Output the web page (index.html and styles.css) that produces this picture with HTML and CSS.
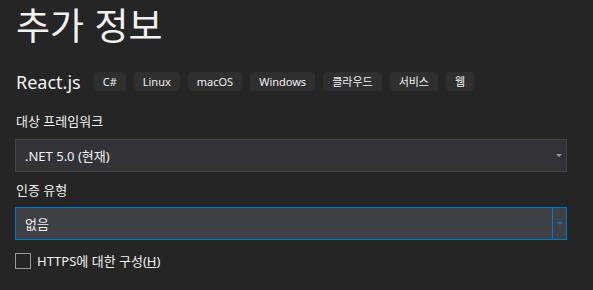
FILE: index.html
```html
<!DOCTYPE html>
<html lang="ko">
<head>
  <meta charset="UTF-8">
  <title>추가 정보</title>
  <link rel="stylesheet" href="styles.css">
</head>
<body>
  <div class="page">
    <h1>추가 정보</h1>
    <div class="template">
      <span class="template-name">React.js</span>
      <ul class="tags">
        <li>C#</li>
        <li>Linux</li>
        <li>macOS</li>
        <li>Windows</li>
        <li>클라우드</li>
        <li>서비스</li>
        <li>웹</li>
      </ul>
    </div>

    <label class="field-label">대상 프레임워크</label>
    <div class="select">
      <span class="select-value">.NET 5.0 (현재)</span>
      <span class="select-arrow"></span>
    </div>

    <label class="field-label second">인증 유형</label>
    <div class="select focused">
      <span class="select-value">없음</span>
      <span class="select-button"><span class="select-arrow"></span></span>
    </div>

    <div class="check">
      <span class="check-box"></span>
      <span>HTTPS에 대한 구성(<u>H</u>)</span>
    </div>
  </div>
</body>
</html>
```
FILE: styles.css
```css
body {
  margin: 0;
  background: #252526;
  color: #f1f1f1;
  font-family: "Noto Sans", "Noto Sans CJK KR", sans-serif;
}
.page {
  width: 552px;
  padding: 0 15px;
}
h1 {
  margin: -3px 0 0;
  padding-left: 1px;
  font-family: "Noto Sans CJK KR", sans-serif;
  font-weight: 400;
  font-size: 37px;
  line-height: 54px;
}
.template {
  display: flex;
  align-items: center;
  margin-top: 19px;
  height: 23px;
  padding-left: 1px;
}
.template-name {
  font-size: 18px;
  margin-right: 13px;
}
.tags {
  display: flex;
  gap: 8px;
  margin: 0;
  padding: 0;
  list-style: none;
}
.tags li {
  background: #2f2f30;
  border-radius: 4px;
  font-size: 11px;
  line-height: 19px;
  height: 19px;
  padding: 0 9px;
}
/* labels above the two drop-downs */
.field-label {
  display: block;
  font-size: 13px;
  line-height: 18px;
  margin-top: 19px;
  padding-left: 1px;
}
.field-label.second {
  margin-top: 9px;
}
.select {
  display: flex;
  align-items: center;
  justify-content: space-between;
  margin-top: 9px;
  height: 31px;
  background: #333337;
  border: 1px solid #434346;
  font-size: 13px;
}
.select-value {
  padding-left: 9px;
}
.select-arrow {
  width: 0;
  height: 0;
  margin-right: 4px;
  border-left: 3px solid transparent;
  border-right: 3px solid transparent;
  border-top: 3px solid #999999;
}
.select.focused {
  background: #3f3f46;
  border-color: #007acc;
  margin-top: 8px;
}
.select-button {
  display: flex;
  align-items: center;
  justify-content: center;
  width: 13px;
  height: 100%;
  border-left: 1px solid #007acc;
}
.select-button .select-arrow {
  margin: 0;
  border-top-color: #007acc;
}
.check {
  display: flex;
  align-items: center;
  gap: 6px;
  margin-top: 11px;
  font-size: 13px;
}
.check-box {
  width: 14px;
  height: 14px;
  border: 1px solid #999999;
}
```
